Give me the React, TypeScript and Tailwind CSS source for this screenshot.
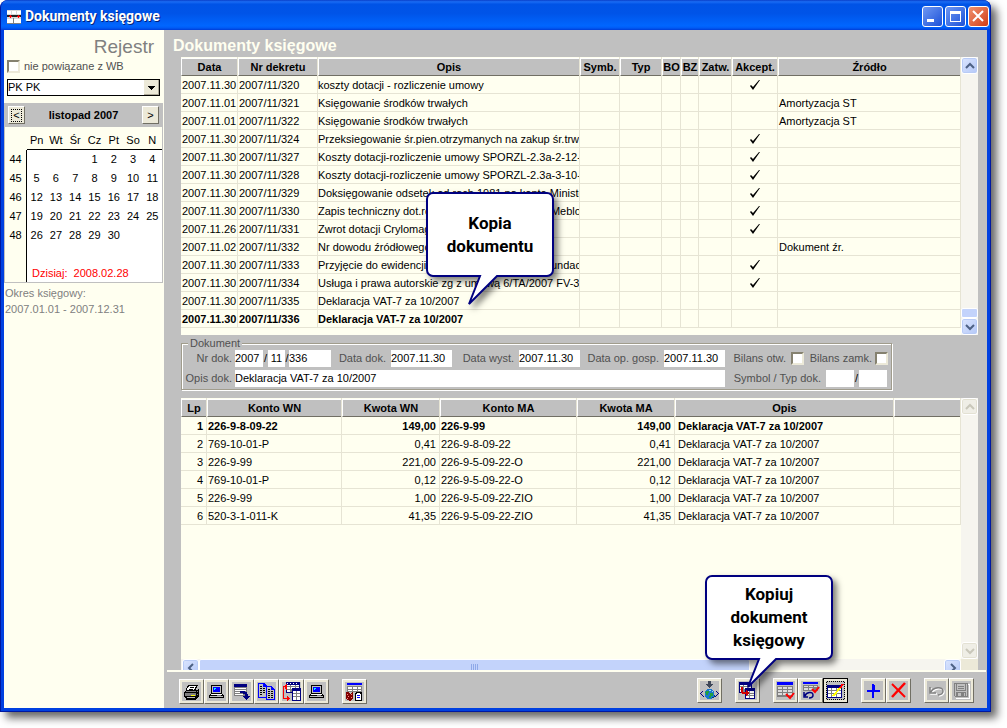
import React from 'react';
import clsx from 'clsx';

interface JournalRow {
  date: string;
  number: string;
  description: string;
  accepted?: boolean;
  source?: string;
}

interface EntryRow {
  lp: number;
  debit: string;
  debitAmount: string;
  credit: string;
  creditAmount: string;
}

const journal: JournalRow[] = [
  { date: '2007.11.30', number: '2007/11/320', description: 'koszty dotacji - rozliczenie umowy', accepted: true },
  { date: '2007.11.01', number: '2007/11/321', description: 'Księgowanie środków trwałych', source: 'Amortyzacja ST' },
  { date: '2007.11.01', number: '2007/11/322', description: 'Księgowanie środków trwałych', source: 'Amortyzacja ST' },
  { date: '2007.11.30', number: '2007/11/324', description: 'Przeksiegowanie śr.pien.otrzymanych na zakup śr.trw', accepted: true },
  { date: '2007.11.30', number: '2007/11/327', description: 'Koszty dotacji-rozliczenie umowy SPORZL-2.3a-2-12-', accepted: true },
  { date: '2007.11.30', number: '2007/11/328', description: 'Koszty dotacji-rozliczenie umowy SPORZL-2.3a-3-10-', accepted: true },
  { date: '2007.11.30', number: '2007/11/329', description: 'Doksięgowanie odsetek od rach 1981 na konto Ministe', accepted: true },
  { date: '2007.11.30', number: '2007/11/330', description: 'Zapis techniczny dot.rozliczenia dotacji od f-my Meblo', accepted: true },
  { date: '2007.11.26', number: '2007/11/331', description: 'Zwrot dotacji Crylomag', accepted: true },
  { date: '2007.11.02', number: '2007/11/332', description: 'Nr dowodu źródłowego', source: 'Dokument źr.' },
  { date: '2007.11.30', number: '2007/11/333', description: 'Przyjęcie do ewidencji wartości prawa majątk. Fundac', accepted: true },
  { date: '2007.11.30', number: '2007/11/334', description: 'Usługa i prawa autorskie zg z umową 6/TA/2007 FV-3', accepted: true },
  { date: '2007.11.30', number: '2007/11/335', description: 'Deklaracja VAT-7 za 10/2007' },
  { date: '2007.11.30', number: '2007/11/336', description: 'Deklaracja VAT-7 za 10/2007' },
];

const entries: EntryRow[] = [
  { lp: 1, debit: '226-9-8-09-22', debitAmount: '149,00', credit: '226-9-99', creditAmount: '149,00' },
  { lp: 2, debit: '769-10-01-P', debitAmount: '0,41', credit: '226-9-8-09-22', creditAmount: '0,41' },
  { lp: 3, debit: '226-9-99', debitAmount: '221,00', credit: '226-9-5-09-22-O', creditAmount: '221,00' },
  { lp: 4, debit: '769-10-01-P', debitAmount: '0,12', credit: '226-9-5-09-22-O', creditAmount: '0,12' },
  { lp: 5, debit: '226-9-99', debitAmount: '1,00', credit: '226-9-5-09-22-ZIO', creditAmount: '1,00' },
  { lp: 6, debit: '520-3-1-011-K', debitAmount: '41,35', credit: '226-9-5-09-22-ZIO', creditAmount: '41,35' },
];

const weekdays = ['Pn', 'Wt', 'Śr', 'Cz', 'Pt', 'So', 'N'];

const weeks = [
  { number: 44, days: ['', '', '', 1, 2, 3, 4] },
  { number: 45, days: [5, 6, 7, 8, 9, 10, 11] },
  { number: 46, days: [12, 13, 14, 15, 16, 17, 18] },
  { number: 47, days: [19, 20, 21, 22, 23, 24, 25] },
  { number: 48, days: [26, 27, 28, 29, 30, '', ''] },
];

/* ---------- icons ---------- */

const Icon = ({ smooth, children }: { smooth?: boolean; children: React.ReactNode }) => (
  <svg
    viewBox="0 0 19 19"
    className="block h-[19px] w-[19px] bg-[#c0c0c0]"
    shapeRendering={smooth ? 'auto' : 'crispEdges'}
    aria-hidden="true"
  >
    {children}
  </svg>
);

const PrinterIcon = () => (
  <Icon>
    <path d="M6 3h10v1h-1v2h-1v2H4V6h1V4h1z" fill="#000" />
    <path d="M7 4h7v1h-1v2h-1v1H5V6h1V5h1z" fill="#fff" />
    <path d="M8 5h4v1H8zM7 7h4v1H7z" fill="#000" />
    <path d="M4 8h11l2-1v7l-3 3v1H4v-1l-2-2v-5z" fill="#000" />
    <path d="M4 9h10v1H4zM15 9h1v1h-1zM15 12h1v1h-1z" fill="#808080" />
    <path d="M3 11h11v3H3z" fill="#808080" />
    <path d="M9 13h4v1H9z" fill="#ff0" />
    <path d="M5 15h8v1H5z" fill="#c0c0c0" />
  </Icon>
);

const ComputerIcon = () => (
  <Icon>
    <path d="M4 3h11v9H4z" fill="#000" />
    <path d="M5 4h9v7H5z" fill="#c0c0c0" />
    <path d="M6 5h7v5H6z" fill="#00f" />
    <path d="M7 6h2v1H8v1H7z" fill="#0ff" />
    <path d="M3 12h13v1h1v3H2v-3h1z" fill="#000" />
    <path d="M4 12h11v1H4z" fill="#fff" />
    <path d="M3 14h13v1H3z" fill="#c0c0c0" />
    <path d="M10 13h4v1h-4z" fill="#808080" />
  </Icon>
);

const TableArrowIcon = () => (
  <Icon>
    <path d="M2 2h13v3H2z" fill="#000080" />
    <path d="M2 5h13v9H2z" fill="#808080" />
    <path d="M3 6h11v1H3zM3 8h11v1H3zM3 10h6v1H3zM3 12h8v1H3z" fill="#fff" />
    <path d="M8 9h5v1h2v2h1v2h2v1h-1v1h-1v1h-1v1h-1v-1h-1v-1h-1v-1h-1v-1h2v-2h-2v-1H8z" fill="#000080" />
  </Icon>
);

const CopyIcon = () => (
  <Icon>
    <path d="M1 1h6l3 3v12H1z" fill="#00f" />
    <path d="M2 2h4v3h3v10H2z" fill="#c0c0c0" />
    <path d="M3 4h2v1H3zM3 6h2v1H3zM6 6h2v1H6zM3 8h2v1H3zM6 8h2v1H6zM3 10h2v1H3zM6 10h2v1H6zM3 12h2v1H3z" fill="#000" />
    <path d="M9 4h5l4 3v11H9z" fill="#00f" />
    <path d="M10 5h4v3h3v9h-7z" fill="#c0c0c0" />
    <path d="M11 7h2v1h-2zM11 9h2v1h-2zM14 9h2v1h-2zM11 11h2v1h-2zM14 11h2v1h-2zM11 13h2v1h-2zM14 13h2v1h-2zM11 15h2v1h-2zM14 15h2v1h-2z" fill="#000" />
  </Icon>
);

const TransferIcon = () => (
  <Icon>
    <path d="M4 0h14v11H4z" fill="#000080" />
    <path d="M5 3h12v7H5z" fill="#808080" />
    <path d="M5 3h3v1H5zM9 3h4v1H9zM14 3h3v1h-3zM5 5h3v2H5zM9 5h4v2H9zM14 5h3v2h-3zM5 8h3v2H5z" fill="#fff" />
    <path d="M5 1h1v1H5zM8 1h1v1H8zM11 1h1v1h-1zM14 1h1v1h-1z" fill="#fff" />
    <path d="M10 6h9v13h-9z" fill="#000080" />
    <path d="M11 9h7v9h-7z" fill="#808080" />
    <path d="M11 9h3v2h-3zM15 9h3v2h-3zM11 12h3v2h-3zM15 12h3v2h-3zM11 15h3v3h-3zM15 15h3v3h-3z" fill="#fff" />
    <path d="M3 4V3h1V2h1v6H4V7H3V5H2v11h3v-2h1v1h1v1h1v1H7v1H6v1H5v-2H1V4z" fill="#f00" />
  </Icon>
);

const LedgerIcon = () => (
  <Icon>
    <path d="M2 1h15v2H2z" fill="#00f" />
    <path d="M2 4h15v6H2z" fill="#808080" />
    <path d="M3 5h4v2H3zM8 5h4v2H8zM13 5h3v2h-3zM3 8h4v1H3zM8 8h4v1H8zM13 8h3v1h-3z" fill="#fff" />
    <path d="M1 10h2l2 2 2-2h1v7l-3 2-4-2z" fill="#800000" />
    <path d="M2 12h1v1H2zM3 14h1v1H3zM6 12h1v1H6zM2 16h1v1H2zM6 15h1v1H6z" fill="#ff8080" />
    <path d="M11 10h5l1 1v8h-7v-8z" fill="#000" />
    <path d="M12 11h3v1h1v6h-5v-6h1z" fill="#fff" />
    <path d="M12 13h3v1h-3zM12 15h3v1h-3z" fill="#00f" />
  </Icon>
);

const GlobeIcon = () => (
  <Icon>
    <path d="M8 0h3v3h2v1h-1v1h-1v1h-1v1H9V6H8V5H7V4H6V3h2z" fill="#404858" />
    <path d="M3 10v1H2v1H1v1h1v1h1v1h1v1H3v-1H2v-1H1v-1H0v-1h1v-1h1v-1zM16 10v1h1v1h1v1h-1v1h-1v1h-1v1h1v-1h1v-1h1v-1h1v-1h-1v-1h-1v-1z" fill="#000080" />
    <circle cx="9.500" cy="13" r="5" fill="#1878d0" />
    <path d="M6 10h3v2H8v2H6v-2H5zM10 12h3v3h-2v2H9v-2h1z" fill="#20a040" />
    <path d="M9 9h2v1H9zM12 10h1v1h-1z" fill="#90e0ff" />
    <path d="M12 17h2v-1h1v-2h-1v2h-2z" fill="#004080" />
  </Icon>
);

const CopyDocumentIcon = () => (
  <Icon>
    <path d="M1 1h13v11H1z" fill="#000080" />
    <path d="M2 4h11v7H2z" fill="#808080" />
    <path d="M2 4h3v1H2zM6 4h3v1H6zM10 4h3v1h-3zM2 6h3v2H2zM6 6h3v2H6zM10 6h3v1h-3zM2 9h3v2H2z" fill="#fff" />
    <path d="M7 7h10v11H7z" fill="#000080" />
    <path d="M8 10h8v7H8z" fill="#808080" />
    <path d="M8 10h3v2H8zM12 10h4v2h-4zM8 13h3v1H8zM12 13h4v1h-4zM8 15h3v2H8zM12 15h4v2h-4z" fill="#fff" />
    <path d="M3 6h2v5h3V9h1v1h1v1h1v2h-1v1H9v1H8v-2H4v-1H3z" fill="#d00000" />
  </Icon>
);

const TableCheckIcon = () => (
  <Icon smooth>
    <path d="M1 1h16v3H1z" fill="#00f" />
    <path d="M1 5h16v11H1z" fill="#808080" />
    <path d="M2 6h4v2H2zM7 6h4v2H7zM12 6h4v2h-4zM2 9h4v2H2zM7 9h4v2H7zM12 9h4v2h-4zM2 12h4v2H2zM7 12h4v2H7zM12 12h4v2h-4z" fill="#dcdcdc" />
    <path d="M10 13l4 4 4-5" stroke="#f00" strokeWidth="2" fill="none" />
  </Icon>
);

const TableUndoIcon = () => (
  <Icon smooth>
    <path d="M2 1h15v2H2z" fill="#00f" />
    <path d="M2 4h15v6H2z" fill="#808080" />
    <path d="M3 5h4v1H3zM8 5h4v1H8zM13 5h3v1h-3zM3 7h4v2H3zM8 7h4v2H8z" fill="#dcdcdc" />
    <path d="M11 8l3 3 4-5" stroke="#f00" strokeWidth="2" fill="none" />
    <path d="M4 15c1-4 8-5 8-1 0 2-2 3-4 3M3 11v5h4" stroke="#000080" strokeWidth="1.500" fill="none" />
  </Icon>
);

const TableEditIcon = () => (
  <Icon>
    <path d="M1 4h15v13H1z" fill="#000080" />
    <path d="M2 7h13v9H2z" fill="#808080" />
    <path d="M2 7h3v2H2zM6 7h4v2H6zM11 7h4v2h-4zM2 10h3v2H2zM6 10h4v2H6zM11 10h4v2h-4zM2 13h3v3H2zM6 13h4v3H6zM11 13h4v3h-4z" fill="#fff" />
    <path d="M7 15l8-9" stroke="#ff0" strokeWidth="2" />
    <path d="M14 7l3-4" stroke="#f00" strokeWidth="2" />
    <path d="M1 .5h17M18.500 1v17M1 18.500h17M.5 1v17" stroke="#000" strokeDasharray="1 1" fill="none" />
  </Icon>
);

const PlusIcon = () => (
  <Icon>
    <path d="M8 3h2v6h6v2h-6v6H8v-6H3V9h5z" fill="#00f" />
    <path d="M10 4h1v5h-1z" fill="#00f" />
  </Icon>
);

const DeleteIcon = () => (
  <Icon smooth>
    <path d="M3 3l13 13" stroke="#f00" strokeWidth="2" fill="none" />
    <path d="M16 2L3 16" stroke="#f00" strokeWidth="2.500" fill="none" />
  </Icon>
);

const UndoIcon = () => (
  <Icon smooth>
    <path d="M4 7v6h6M5 12c2-5 12-6 12-1 0 2-2 4-5 4" stroke="#fff" strokeWidth="1.500" fill="none" />
    <path d="M3 6v6h6M4 11c2-5 12-6 12-1 0 2-2 4-5 4" stroke="#808080" strokeWidth="1.500" fill="none" />
  </Icon>
);

const SaveIcon = () => (
  <Icon>
    <path d="M3 3h14v14H4" stroke="#fff" fill="none" />
    <path d="M2 2h14v14H3l-1-1z" fill="#808080" />
    <path d="M3 3h1v12H3zM14 3h1v12h-1zM5 3h8v6H5zM4 10h10v1H4zM6 12h3v3H6zM12 12h1v3h-1z" fill="#c0c0c0" />
    <path d="M6 5h6v1H6zM6 7h6v1H6z" fill="#808080" />
  </Icon>
);

const AppIcon = () => (
  <svg viewBox="0 0 14 14" className="h-[14px] w-[14px]" shapeRendering="crispEdges" aria-hidden="true">
    <path d="M0 0h14v14H0z" fill="#d8d8d8" />
    <path d="M0 1h4v3H0zM5 1h4v3H5zM10 1h4v3h-4zM0 9h6v4H0zM7 9h7v4H7z" fill="#fff" />
    <path d="M0 5h14v2H0z" fill="#202020" />
    <path d="M2 6h3v1H2zM3 5h1v3H3zM10 6h3v1h-3zM11 5h1v3h-1z" fill="#f00" />
    <path d="M0 13h14v1H0zM6 8h1v6H6z" fill="#808080" />
  </svg>
);

const Tick = () => (
  <svg viewBox="0 0 12 12" className="mx-auto block h-3 w-3" role="img" aria-label="tak">
    <path d="M1 7l1-1 2 2 6-7h1L4 11z" fill="#000" />
  </svg>
);

type Direction = 'up' | 'down' | 'left' | 'right';

const chevrons: Record<Direction, string> = {
  up: 'M2 8l4-4 4 4',
  down: 'M2 4l4 4 4-4',
  left: 'M8 2L4 6l4 4',
  right: 'M4 2l4 4-4 4',
};

/* ---------- small controls ---------- */

function ScrollButton({ direction, disabled }: { direction: Direction; disabled?: boolean }) {
  return (
    <button
      type="button"
      aria-label={`Przewiń ${direction}`}
      disabled={disabled}
      className={clsx(
        'flex h-[17px] w-[17px] shrink-0 items-center justify-center rounded-[3px] border border-white',
        disabled ? 'bg-[#efeee6] text-[#c9c7ba] shadow-[inset_0_0_0_1px_#e3e1d3]' : 'bg-linear-to-br from-[#dbe5fe] to-[#b4c8f8] text-[#4d6185] shadow-[inset_0_0_0_1px_#b8cbf6]'
      )}
    >
      <svg viewBox="0 0 12 12" className="h-3 w-3" aria-hidden="true">
        <path d={chevrons[direction]} fill="none" stroke="currentColor" strokeWidth="2" />
      </svg>
    </button>
  );
}

function ToolButton({ label, active, children }: { label: string; active?: boolean; children: React.ReactNode }) {
  return (
    <button
      type="button"
      aria-label={label}
      className={clsx(
        'h-[25px] w-[25px] border bg-[#ece9d8] p-[2px]',
        active ? 'border-black' : 'border-t-white border-r-[#716f64] border-b-[#716f64] border-l-white'
      )}
    >
      {children}
    </button>
  );
}

function Check({ id }: { id: string }) {
  return (
    <input
      id={id}
      type="checkbox"
      className="h-[13px] w-[13px] shrink-0 appearance-none border-2 border-t-[#85816f] border-r-[#ece9d8] border-b-[#ece9d8] border-l-[#85816f] bg-white"
    />
  );
}

function Field({ id, label, value, labelClass, inputClass }: { id: string; label: string; value: string; labelClass: string; inputClass: string }) {
  return (
    <>
      <label htmlFor={id} className={clsx('shrink-0 text-right text-[#505050]', labelClass)}>{label}</label>
      <input id={id} defaultValue={value} className={clsx('h-[17px] bg-white text-black outline-none', inputClass)} />
    </>
  );
}

function HeaderCell({ children }: { children?: React.ReactNode }) {
  return (
    <th className="h-[19px] border-r border-[#e6e4d4] p-0">
      <div className="h-[18px] border-t border-b border-l border-t-white border-b-[#716f64] border-l-white bg-[#c0c0c0] text-center leading-[16px] whitespace-nowrap">
        {children}
      </div>
    </th>
  );
}

const cell = 'h-[18px] overflow-hidden border-r border-b border-[#e6e4d4] pt-px pb-0 leading-4 whitespace-nowrap';

// Speech balloon whose tail points down and to the left
function Callout({ className, children }: { className: string; children: React.ReactNode }) {
  return (
    <div className={clsx('pointer-events-none absolute z-10 h-[116px] w-[128px]', className)}>
      <svg viewBox="0 0 128 116" className="absolute inset-0 h-full w-full overflow-visible drop-shadow-[4px_4px_3px_rgba(0,0,0,0.5)]" aria-hidden="true">
        <path
          d="M7 1h114a6 6 0 0 1 6 6v71a6 6 0 0 1-6 6H71L43 112 54 84H7a6 6 0 0 1-6-6V7a6 6 0 0 1 6-6z"
          fill="#fff"
          stroke="#000080"
          strokeWidth="2"
        />
      </svg>
      <p className="relative flex h-[85px] items-center justify-center text-center font-[Roboto,sans-serif] text-[17px] leading-[23px] font-bold text-black">
        <span>{children}</span>
      </p>
    </div>
  );
}

/* ---------- page sections ---------- */

function TitleBar() {
  const button = 'flex h-[21px] w-[21px] items-center justify-center rounded-[3px] border border-white';

  return (
    <header className="flex h-[30px] shrink-0 items-center bg-[linear-gradient(180deg,#0a3fc8,#1a6cf4_6%,#0053e6_14%,#0054e8_45%,#0066ff_86%,#005bf5_93%,#003dd7)] pt-[3px] pr-px pl-1.5">
      <AppIcon />
      <h1 className="ml-1 flex-1 font-[Roboto,sans-serif] text-[14px] font-bold text-white [text-shadow:1px_1px_0_#00217a]">Dokumenty księgowe</h1>
      <div className="flex gap-0.5">
        <button type="button" aria-label="Minimalizuj" className={clsx(button, 'bg-linear-to-br from-[#6f97f2] to-[#1c4fd8]')}>
          <svg viewBox="0 0 19 19" className="h-[19px] w-[19px]" shapeRendering="crispEdges"><path d="M4 12h7v3H4z" fill="#fff" /></svg>
        </button>
        <button type="button" aria-label="Maksymalizuj" className={clsx(button, 'bg-linear-to-br from-[#6f97f2] to-[#1c4fd8]')}>
          <svg viewBox="0 0 19 19" className="h-[19px] w-[19px]" shapeRendering="crispEdges"><path d="M4 4h11v11H4zm1 3v7h9V7z" fill="#fff" fillRule="evenodd" /></svg>
        </button>
        <button type="button" aria-label="Zamknij" className={clsx(button, 'bg-linear-to-br from-[#f0906c] to-[#cf3a10]')}>
          <svg viewBox="0 0 19 19" className="h-[19px] w-[19px]"><path d="M4 4l10 10M14 4L4 14" stroke="#fff" strokeWidth="2" /></svg>
        </button>
      </div>
    </header>
  );
}

function Calendar() {
  const navButton = 'flex h-[18px] w-[17px] items-center justify-center border border-t-white border-r-[#716f64] border-b-[#716f64] border-l-white bg-[#ece9d8] leading-none';

  return (
    <section className="mt-[7px] mr-px border-r border-b border-[#c0c0c0]">
      <div className="flex h-6 items-center justify-between bg-[#c0c0c0] pr-[3px] pl-1">
        <button type="button" aria-label="Poprzedni miesiąc" className={navButton}>
          <span className="border border-dotted border-black px-px">&lt;</span>
        </button>
        <span className="font-bold">listopad 2007</span>
        <button type="button" aria-label="Następny miesiąc" className={navButton}>&gt;</button>
      </div>
      <div className="border-l border-[#c0c0c0] bg-white">
        <table className="w-full table-fixed border-separate border-spacing-0 text-center">
          <colgroup>
            <col className="w-[22px]" />
            {weekdays.map((day) => <col key={day} />)}
          </colgroup>
          <thead>
            <tr className="h-[23px] bg-[#fffff0]">
              <th aria-label="Tydzień" />
              {weekdays.map((day) => (
                <th key={day} className="border-b border-black p-0 pt-1 font-normal">{day}</th>
              ))}
            </tr>
          </thead>
          <tbody>
            {weeks.map((week) => (
              <tr key={week.number} className="h-[19px]">
                <th className="border-r border-black bg-[#fffff0] p-0 font-normal">{week.number}</th>
                {week.days.map((day, i) => <td key={i} className="p-0">{day}</td>)}
              </tr>
            ))}
            <tr className="h-[37px]">
              <th className="border-r border-black bg-[#fffff0]" />
              <td colSpan={7} className="p-0 pl-[5px] text-left align-bottom whitespace-pre text-[#f00]">{'Dzisiaj:  2008.02.28'}</td>
            </tr>
          </tbody>
        </table>
      </div>
    </section>
  );
}

function Sidebar() {
  return (
    <aside className="w-40 shrink-0 bg-[#fffff0]">
      <h2 className="h-[30px] pr-2.5 text-right text-[19px] leading-[34px] text-[#808080]">Rejestr</h2>
      <div className="flex h-[13px] items-center gap-1 pl-[3px]">
        <Check id="unlinked" />
        <label htmlFor="unlinked" className="text-[#505050]">nie powiązane z WB</label>
      </div>
      <div className="relative mt-1.5 mr-1 ml-[3px] h-[17px]">
        <select aria-label="Rejestr" className="h-full w-full appearance-none border border-black bg-white leading-[15px] outline-none">
          <option>PK PK</option>
        </select>
        <span className="pointer-events-none absolute top-px right-px flex h-[15px] w-[15px] items-center justify-center bg-[#ece9d8] shadow-[inset_-1px_-1px_0_#aca899]">
          <svg viewBox="0 0 7 4" className="h-1 w-[7px]" shapeRendering="crispEdges"><path d="M0 0h7v1H6v1H5v1H4v1H3V3H2V2H1V1H0z" /></svg>
        </span>
      </div>
      <Calendar />
      <div className="pt-0.5 pl-px leading-4 text-[#808080]">
        <p>Okres księgowy:</p>
        <p>2007.01.01 - 2007.12.31</p>
      </div>
    </aside>
  );
}

function JournalGrid() {
  return (
    <section className="relative flex h-[278px] shrink-0 bg-[#fffff0]">
      <div className="min-w-0 flex-1 overflow-hidden">
        <table className="w-full table-fixed border-separate border-spacing-0">
          <colgroup>
            <col className="w-[57px]" />
            <col className="w-[80px]" />
            <col className="w-[262px]" />
            <col className="w-[40px]" />
            <col className="w-[42px]" />
            <col className="w-[19px]" />
            <col className="w-[18px]" />
            <col className="w-[33px]" />
            <col className="w-[46px]" />
            <col />
          </colgroup>
          <thead>
            <tr>
              {['Data', 'Nr dekretu', 'Opis', 'Symb.', 'Typ', 'BO', 'BZ', 'Zatw.', 'Akcept.', 'Źródło'].map((name) => (
                <HeaderCell key={name}>{name}</HeaderCell>
              ))}
            </tr>
          </thead>
          <tbody>
            {journal.map((row, i) => (
              <tr key={row.number} className={clsx(i === journal.length - 1 && 'font-bold')}>
                <td className={clsx(cell, 'pr-0 pl-px')}>{row.date}</td>
                <td className={clsx(cell, 'pr-0 pl-px')}>{row.number}</td>
                <td className={clsx(cell, 'px-0')}>{row.description}</td>
                <td className={cell} />
                <td className={cell} />
                <td className={cell} />
                <td className={cell} />
                <td className={cell} />
                <td className={clsx(cell, 'px-0')}>{row.accepted && <Tick />}</td>
                <td className={clsx(cell, 'pr-0 pl-px')}>{row.source}</td>
              </tr>
            ))}
          </tbody>
        </table>
      </div>
      <div className="flex w-[17px] flex-col bg-[#f6f5ef]">
        <ScrollButton direction="up" />
        <div className="flex-1" />
        <div className="h-[10px] rounded-[2px] border border-white bg-[#c3d3fb]" />
        <ScrollButton direction="down" />
      </div>
      <Callout className="top-[135px] left-[245px]">Kopia<br />dokumentu</Callout>
    </section>
  );
}

function DocumentForm() {
  return (
    <fieldset className="mt-0.5 w-[711px] border border-[#a09c8c] pb-0.5 shadow-[1px_1px_0_#fff,inset_1px_1px_0_#fff]">
      <legend className="ml-1.5 bg-[#c0c0c0] px-0.5 leading-3 text-[#505050]">Dokument</legend>
      <div className="flex flex-col gap-[3px]">
        <div className="mt-px flex items-center">
          <Field id="doc-year" label="Nr dok." value="2007" labelClass="w-[53px] pr-[3px]" inputClass="w-7" />
          <span className="w-[5px] text-center">/</span>
          <input aria-label="Miesiąc" defaultValue="11" className="h-[17px] w-[17px] bg-white text-center outline-none" />
          <span className="w-1 text-center">/</span>
          <input aria-label="Numer" defaultValue="336" className="h-[17px] w-[42px] bg-white outline-none" />
          <Field id="doc-date" label="Data dok." value="2007.11.30" labelClass="w-[60px] pr-[5px]" inputClass="w-[61px]" />
          <Field id="issue-date" label="Data wyst." value="2007.11.30" labelClass="w-[67px] pr-[5px]" inputClass="w-[61px]" />
          <Field id="operation-date" label="Data op. gosp." value="2007.11.30" labelClass="w-[84px] pr-[5px]" inputClass="w-[61px]" />
          <label htmlFor="opening" className="w-[66px] pr-[5px] text-right text-[#505050]">Bilans otw.</label>
          <Check id="opening" />
          <label htmlFor="closing" className="w-[71px] pr-[3px] text-right text-[#505050]">Bilans zamk.</label>
          <Check id="closing" />
        </div>
        <div className="flex items-center">
          <Field id="doc-description" label="Opis dok." value="Deklaracja VAT-7 za 10/2007" labelClass="w-[53px] pr-[3px]" inputClass="w-[490px]" />
          <Field id="doc-symbol" label="Symbol / Typ dok." value="" labelClass="w-[101px] pr-[5px]" inputClass="w-7" />
          <span className="w-[5px] text-center">/</span>
          <input aria-label="Typ dokumentu" className="h-[17px] w-7 bg-white outline-none" />
        </div>
      </div>
    </fieldset>
  );
}

function EntriesGrid() {
  return (
    <section className="mt-2 flex min-h-0 flex-1 bg-[#fffff0]">
      <div className="flex min-w-0 flex-1 flex-col">
        <div className="flex-1">
          <table className="w-full table-fixed border-separate border-spacing-0">
            <colgroup>
              <col className="w-[26px]" />
              <col className="w-[135px]" />
              <col className="w-[98px]" />
              <col className="w-[137px]" />
              <col className="w-[98px]" />
              <col className="w-[219px]" />
              <col />
            </colgroup>
            <thead>
              <tr>
                {['Lp', 'Konto WN', 'Kwota WN', 'Konto MA', 'Kwota MA', 'Opis', ''].map((name) => (
                  <HeaderCell key={name}>{name}</HeaderCell>
                ))}
              </tr>
            </thead>
            <tbody>
              {entries.map((row) => (
                <tr key={row.lp} className={clsx(row.lp === 1 && 'font-bold')}>
                  <td className={clsx(cell, 'pr-[3px] pl-0 text-right')}>{row.lp}</td>
                  <td className={clsx(cell, 'pr-0 pl-px')}>{row.debit}</td>
                  <td className={clsx(cell, 'pr-[3px] pl-0 text-right')}>{row.debitAmount}</td>
                  <td className={clsx(cell, 'pr-0 pl-px')}>{row.credit}</td>
                  <td className={clsx(cell, 'pr-[3px] pl-0 text-right')}>{row.creditAmount}</td>
                  <td className={clsx(cell, 'pr-0 pl-[3px]')}>Deklaracja VAT-7 za 10/2007</td>
                  <td className={cell} />
                </tr>
              ))}
            </tbody>
          </table>
        </div>
        <div className="flex h-[11px] items-start overflow-hidden bg-[#f6f5ef] pl-px">
          <ScrollButton direction="left" />
          <div className="flex h-[17px] w-[551px] justify-center gap-px rounded-[2px] border border-white bg-[#c3d3fb] pt-1">
            {[0, 1, 2, 3].map((grip) => <span key={grip} className="h-2 w-px bg-[#8fa9e8]" />)}
          </div>
          <div className="flex-1" />
          <ScrollButton direction="right" />
        </div>
      </div>
      <div className="flex w-[17px] flex-col bg-[#f6f5ef]">
        <ScrollButton direction="up" disabled />
        <div className="flex-1" />
        <ScrollButton direction="down" disabled />
        <div className="h-[11px] bg-[#ece9d8]" />
      </div>
    </section>
  );
}

function Toolbar() {
  return (
    <footer className="mr-px ml-[3px] flex h-[38px] shrink-0 items-center justify-between border-t-2 border-[#fffff0] pt-[3px] pr-3 pl-3">
      <div className="flex gap-[13px]">
        <div className="flex">
          <ToolButton label="Drukuj"><PrinterIcon /></ToolButton>
          <ToolButton label="Podgląd"><ComputerIcon /></ToolButton>
          <ToolButton label="Eksport"><TableArrowIcon /></ToolButton>
          <ToolButton label="Kopiuj"><CopyIcon /></ToolButton>
          <ToolButton label="Przenieś"><TransferIcon /></ToolButton>
          <ToolButton label="Ekran"><ComputerIcon /></ToolButton>
        </div>
        <ToolButton label="Księga"><LedgerIcon /></ToolButton>
      </div>
      <div className="flex gap-[13px]">
        <ToolButton label="Internet"><GlobeIcon /></ToolButton>
        <div className="relative">
          <ToolButton label="Kopiuj dokument księgowy"><CopyDocumentIcon /></ToolButton>
          <Callout className="bottom-[14px] left-[-30px]">Kopiuj<br />dokument<br />księgowy</Callout>
        </div>
        <div className="flex">
          <ToolButton label="Zatwierdź"><TableCheckIcon /></ToolButton>
          <ToolButton label="Cofnij zatwierdzenie"><TableUndoIcon /></ToolButton>
          <ToolButton label="Edytuj" active><TableEditIcon /></ToolButton>
        </div>
        <div className="flex">
          <ToolButton label="Dodaj"><PlusIcon /></ToolButton>
          <ToolButton label="Usuń"><DeleteIcon /></ToolButton>
        </div>
        <div className="flex">
          <ToolButton label="Cofnij"><UndoIcon /></ToolButton>
          <ToolButton label="Zapisz"><SaveIcon /></ToolButton>
        </div>
      </div>
    </footer>
  );
}

export default function App() {
  return (
    <div className="h-screen overflow-hidden bg-white pr-4 pb-4 font-['Liberation_Sans',sans-serif] text-[11px] leading-[17px] text-black">
      <div className="flex h-full flex-col rounded-t-lg bg-[#0038d8] shadow-[6px_6px_9px_rgba(0,0,0,0.6)]">
        <div className="flex min-h-0 flex-1 flex-col overflow-hidden rounded-t-lg border-x border-b border-[#0018a0]">
          <TitleBar />
          <div className="flex min-h-0 flex-1 border-x-3 border-b-3 border-[#0040e0] bg-[#c0c0c0]">
            <Sidebar />
            <main className="flex min-w-0 flex-1 flex-col">
              <div className="flex min-h-0 flex-1 flex-col pr-[9px] pl-[17px]">
                <h2 className="-ml-2 h-[27px] text-[16px] leading-[31px] font-bold text-[#fffff0]">Dokumenty księgowe</h2>
                <JournalGrid />
                <DocumentForm />
                <EntriesGrid />
              </div>
              <Toolbar />
            </main>
          </div>
        </div>
      </div>
    </div>
  );
}
